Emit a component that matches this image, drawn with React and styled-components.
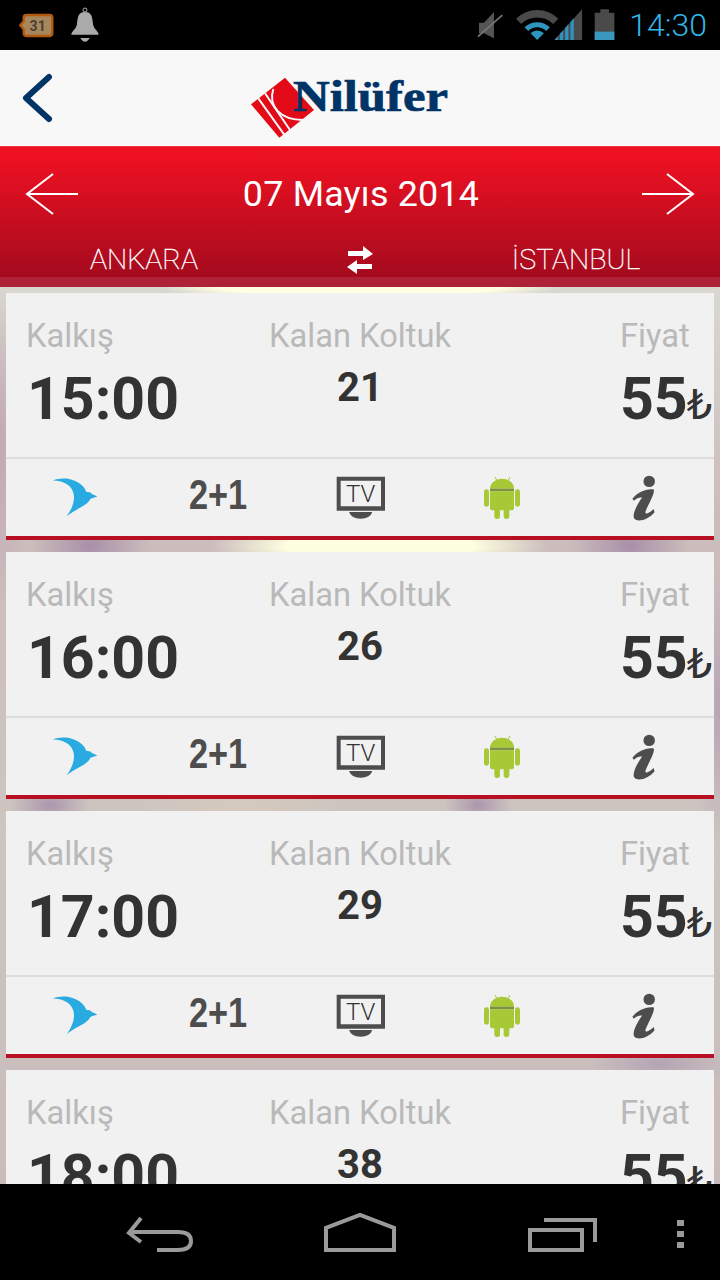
import React from "react";
import styled, { createGlobalStyle } from "styled-components";

const GlobalStyle = createGlobalStyle`
  html, body {
    margin: 0;
    padding: 0;
    background: #000;
  }
`;

const Page = styled.div`
  width: 720px;
  height: 1280px;
  display: flex;
  flex-direction: column;
  overflow: hidden;
  font-family: Roboto, "Liberation Sans", sans-serif;
`;

const StatusBar = styled.div`
  height: 50px;
  flex: none;
  background: #000;
  display: flex;
  align-items: center;
  justify-content: space-between;
  padding: 0 13px 0 17px;
`;

const StatusGroup = styled.div`
  display: flex;
  align-items: center;
  column-gap: 12px;
`;

const Clock = styled.div`
  font-weight: 300;
  font-size: 32px;
  line-height: 54px;
  color: #33b5e5;
`;

const Header = styled.div`
  height: 96px;
  flex: none;
  background: #f8f8f8;
  display: flex;
  align-items: center;
  justify-content: center;
  position: relative;
`;

const BackButton = styled.svg`
  position: absolute;
  left: 22px;
  top: 23px;
`;

const LogoDrawing = styled.svg`
  margin: 20px 20px 0 0;
  overflow: visible;
`;

const DateBand = styled.div`
  height: 141px;
  flex: none;
  box-sizing: border-box;
  border-top: 1px solid #ee3344;
  background: linear-gradient(#ee1122 0%, #ee1122 6%, #a50a1e 93%, #ad2236 93.1%, #ad2236 100%);
  display: flex;
  flex-direction: column;
  color: #fff;
`;

const DateRow = styled.div`
  height: 94px;
  box-sizing: border-box;
  padding: 0 25px;
  display: flex;
  align-items: center;
  justify-content: space-between;
`;

const DateText = styled.div`
  font-size: 35.9px;
  line-height: 40px;
  letter-spacing: 0.2px;
  margin-left: 2px;
`;

const RouteRow = styled.div`
  display: grid;
  grid-template-columns: repeat(3, 216px);
  justify-content: center;
  justify-items: center;
  align-items: center;
  height: 38px;
`;

const City = styled.div`
  font-weight: 100;
  font-size: 28.5px;
  line-height: 36px;
  -webkit-text-stroke: 0.4px #fff;
`;

const List = styled.div`
  flex: 1;
  min-height: 0;
  overflow: hidden;
  box-sizing: border-box;
  padding: 6px 6px 0;
  display: flex;
  flex-direction: column;
  row-gap: 12px;
  background:
    radial-gradient(ellipse 170px 26px at 380px 259px, #feffe0 55%, rgba(254, 255, 224, 0) 100%),
    radial-gradient(ellipse 200px 14px at 360px 0px, #feffe0 70%, rgba(254, 255, 224, 0) 100%),
    radial-gradient(ellipse 60px 40px at 90px 259px, #a890a8 0%, rgba(168, 144, 168, 0) 100%),
    radial-gradient(ellipse 60px 40px at 630px 259px, #a890a8 0%, rgba(168, 144, 168, 0) 100%),
    radial-gradient(ellipse 40px 24px at 50px 518px, #ab97ad 0%, rgba(171, 151, 173, 0) 100%),
    radial-gradient(ellipse 34px 24px at 478px 518px, #ab97ad 0%, rgba(171, 151, 173, 0) 100%),
    radial-gradient(ellipse 70px 30px at 660px 777px, #b4a4b4 0%, rgba(180, 164, 180, 0) 100%),
    radial-gradient(ellipse 30px 160px at 0px 160px, #c2a8b4 0%, rgba(194, 168, 180, 0) 100%),
    radial-gradient(ellipse 30px 140px at 720px 420px, #b8a4b4 0%, rgba(184, 164, 180, 0) 100%),
    radial-gradient(ellipse 100px 24px at 240px 518px, #d6cabd 0%, rgba(214, 202, 189, 0) 100%),
    linear-gradient(#d8d8d0 0%, #cbbcbc 25%, #cdc5c0 60%, #c8bcbc 100%);
`;

const Card = styled.div`
  flex: none;
  height: 247px;
  box-sizing: border-box;
  background: #f1f1f1;
  border-bottom: 4px solid #b80f22;
  display: flex;
  flex-direction: column;
`;

const CardTop = styled.div`
  height: 166px;
  flex: none;
  box-sizing: border-box;
  display: grid;
  grid-template-columns: 1fr 1fr 1fr;
  border-bottom: 2px solid #dddddd;
`;

const Column = styled.div`
  padding-top: 25px;
  padding-left: ${(props) => props.$left || 0}px;
  text-align: ${(props) => props.$align || "left"};
`;

const Label = styled.div`
  font-weight: 400;
  font-size: 32.7px;
  line-height: 36px;
  color: #b9b9b9;
`;

const Time = styled.div`
  font-weight: 700;
  font-size: 59px;
  line-height: 70px;
  margin: 10px 0 0 ${(props) => props.$shift || 0}px;
  color: #333333;
`;

const Seats = styled.div`
  font-weight: 700;
  font-size: 40px;
  line-height: 44px;
  margin-top: 12px;
  color: #333333;
`;

const Price = styled(Time)`
  display: flex;
  align-items: baseline;
`;

const Lira = styled.span`
  font-family: "DejaVu Sans", sans-serif;
  font-weight: 400;
  font-size: 40px;
  margin-left: -1px;
`;

const Features = styled.div`
  flex: 1;
  display: grid;
  grid-template-columns: repeat(5, 1fr);
  align-items: center;
  justify-items: center;
`;

const Seating = styled.div`
  font-family: "Liberation Sans", sans-serif;
  font-weight: 700;
  font-size: 39px;
  line-height: 44px;
  color: #4d4d4d;
  transform: translateY(-3px) scale(0.88, 1.1);
`;

const NavBar = styled.div`
  height: 96px;
  flex: none;
  background: #000;
`;

const NavDrawing = styled.svg`
  display: block;
`;

const trips = [
  { time: "15:00", seats: 21 },
  { time: "16:00", seats: 26 },
  { time: "17:00", seats: 29 },
  { time: "18:00", seats: 38 },
];

function NotificationIcons() {
  return (
    <svg width="85" height="40" viewBox="50 15 255 120">
      <path
        d="M78 45 H148 Q156 45 156 53 V100 Q156 108 148 108 H78 Q70 108 70 100 V88 L60 76 L70 64 V53 Q70 45 78 45 Z"
        fill="#a8875c"
        stroke="#b3590f"
        strokeWidth="7"
      />
      <text x="112" y="93" textAnchor="middle" fontFamily="Roboto" fontWeight="700" fontSize="42" fill="#4a4038">
        31
      </text>
      <circle cx="254" cy="30" r="6" fill="none" stroke="#aaa" strokeWidth="3" />
      <path d="M254 36 C232 36 232 55 230 72 C228 88 214 92 213 104 H295 C294 92 280 88 278 72 C276 55 276 36 254 36 Z" fill="#aaa" />
      <path d="M240 114 H268 Q262 125 254 125 Q246 125 240 114 Z" fill="#aaa" />
    </svg>
  );
}

function SystemIcons() {
  return (
    <svg width="143" height="50" viewBox="40 0 430 150">
      <path d="M55 68 H70 L100 36 V115 L70 100 H55 Z" fill="#555" />
      <path d="M52 110 L125 45" stroke="#777" strokeWidth="5" />
      <path d="M166.4 56.4 A90 90 0 0 1 293.6 56.4 L278 72 A68 68 0 0 0 182 72 Z" fill="#4a4a4a" />
      <path d="M192 82 A54 54 0 0 1 268 82 L257 93 A38 38 0 0 0 203 93 Z" fill="#2f95c0" />
      <path d="M230 120 L210 100 A28 28 0 0 1 250 100 Z" fill="#2f95c0" />
      <path d="M282 120 L365 28 V120 Z" fill="#4a4a4a" />
      <path d="M282 120 L292 109 V120 Z M298 102 L308 91 V120 H298 Z M314 84 L324 73 V120 H314 Z M330 66 L340 55 V120 H330 Z" fill="#2f95c0" />
      <path d="M420 28 H446 V38 H462 V120 H403 V38 H420 Z" fill="#4a4a4a" />
      <rect x="403" y="95" width="59" height="25" fill="#3a97bf" />
    </svg>
  );
}

function Logo() {
  return (
    <LogoDrawing width="200" height="64" viewBox="0 0 200 64">
      <path d="M35 1.7 L1 28.3 L29.3 61.7 L64 34 Z" fill="#e30b17" />
      <path d="M8.3 22.3 L35 59.7 M15 17.3 L40 54" stroke="#f8f8f8" strokeWidth="2" />
      <path d="M23.3 13 C18 30 30 44 53.3 44 L64 43" fill="none" stroke="#f8f8f8" strokeWidth="2" />
      <text
        x="43"
        y="34.5"
        textLength="155"
        lengthAdjust="spacingAndGlyphs"
        fontFamily="Liberation Serif"
        fontWeight="700"
        fontSize="44"
        fill="#003366"
        stroke="#003366"
        strokeWidth="0.7"
      >
        Nilüfer
      </text>
    </LogoDrawing>
  );
}

function Arrow({ flip }) {
  return (
    <svg width="54" height="42" viewBox="0 0 54 42">
      <path
        d={flip ? "M1 21 H52 M26 1 L52 21 L26 41" : "M53 21 H2 M28 1 L2 21 L28 41"}
        fill="none"
        stroke="#fff"
        strokeWidth="2"
      />
    </svg>
  );
}

function SwapIcon() {
  return (
    <svg width="28" height="28" viewBox="0 0 28 28">
      <path d="M2 5 H17 V0 L27 8 L17 14 V10 H2 Z" fill="#fff" />
      <path d="M26 18 H11 V14 L1 21 L11 28 V23 H26 Z" fill="#fff" />
    </svg>
  );
}

function BirdIcon() {
  return (
    <svg width="50" height="41" viewBox="60 40 145 120" style={{ marginRight: 3 }}>
      <path
        d="M68 50 C95 40 135 42 160 72 L166 84 Q178 82 182 90 L198 97 L178 104 C168 125 140 130 108 155 C130 125 142 85 110 62 C98 54 85 50 68 50 Z"
        fill="#29abe2"
      />
    </svg>
  );
}

function TvIcon() {
  return (
    <svg width="50" height="44" viewBox="48 36 150 132" style={{ marginLeft: 2 }}>
      <path d="M50 38 H195 V140 H50 Z M62 50 V127 H183 V50 Z" fill="#4d4d4d" fillRule="evenodd" />
      <text x="122" y="115" textAnchor="middle" fontFamily="Roboto" fontWeight="300" fontSize="72" fill="#333">
        TV
      </text>
      <path d="M87 144 H157 Q150 164 122 164 Q94 164 87 144 Z" fill="#4d4d4d" />
    </svg>
  );
}

function AndroidIcon() {
  return (
    <svg width="38" height="44" viewBox="490 32 112 132">
      <path d="M525 35 L532 48 M570 35 L563 48" stroke="#a4c639" strokeWidth="3" />
      <path d="M510 70 C510 50 530 40 546 40 C562 40 582 50 582 70 Z" fill="#a6c935" />
      <rect x="510" y="70" width="72" height="8" fill="#7e9142" />
      <path d="M510 78 H582 V128 Q582 135 574 135 H518 Q510 135 510 128 Z" fill="#a6c935" />
      <rect x="492" y="72" width="15" height="52" rx="7" fill="#a6c935" />
      <rect x="585" y="72" width="15" height="52" rx="7" fill="#a6c935" />
      <rect x="523" y="130" width="17" height="31" rx="8" fill="#a6c935" />
      <rect x="551" y="130" width="17" height="31" rx="8" fill="#a6c935" />
    </svg>
  );
}

function InfoIcon() {
  return (
    <svg width="27" height="47" viewBox="930 30 80 140">
      <circle cx="987" cy="52" r="17" fill="#4d4d4d" />
      <path
        d="M937 104 C950 86 978 72 1001 76 C1003 92 985 118 976 142 C974 152 986 148 1000 134 L1003 144 C985 166 952 176 942 162 C936 150 950 122 966 100 C955 99 946 105 941 110 Z"
        fill="#4d4d4d"
      />
    </svg>
  );
}

function NavIcons() {
  return (
    <NavDrawing width="720" height="96" viewBox="0 1184 720 96">
      <g fill="none" stroke="#9a9a9a" strokeWidth="4">
        <path d="M141 1218 L129 1233 L141 1242 M130 1232 H178 Q191 1232 191 1241 Q191 1250 178 1250 H157" />
        <path d="M326 1250 V1228 L360 1215 L394 1228 V1250 Z" />
        <path d="M530 1230 H582 V1250 H530 Z" />
        <path d="M544 1220 H595 V1242" />
      </g>
      <g fill="#9a9a9a">
        <rect x="677" y="1220" width="7" height="6" />
        <rect x="677" y="1231" width="7" height="6" />
        <rect x="677" y="1242" width="7" height="6" />
      </g>
    </NavDrawing>
  );
}

export default function App() {
  return (
    <Page>
      <GlobalStyle />
      <StatusBar>
        <NotificationIcons />
        <StatusGroup>
          <SystemIcons />
          <Clock>14:30</Clock>
        </StatusGroup>
      </StatusBar>
      <Header>
        <BackButton width="32" height="50" viewBox="0 0 32 50">
          <path d="M27 4 L4 25 L27 46" fill="none" stroke="#003366" strokeWidth="6" strokeLinecap="round" strokeLinejoin="round" />
        </BackButton>
        <Logo />
      </Header>
      <DateBand>
        <DateRow>
          <Arrow />
          <DateText>07 Mayıs 2014</DateText>
          <Arrow flip />
        </DateRow>
        <RouteRow>
          <City>ANKARA</City>
          <SwapIcon />
          <City>İSTANBUL</City>
        </RouteRow>
      </DateBand>
      <List>
        {trips.map((trip) => (
          <Card key={trip.time}>
            <CardTop>
              <Column $left={20}>
                <Label>Kalkış</Label>
                <Time $shift={1}>{trip.time}</Time>
              </Column>
              <Column $align="center">
                <Label>Kalan Koltuk</Label>
                <Seats>{trip.seats}</Seats>
              </Column>
              <Column $left={142}>
                <Label>Fiyat</Label>
                <Price>
                  55<Lira>₺</Lira>
                </Price>
              </Column>
            </CardTop>
            <Features>
              <BirdIcon />
              <Seating>2+1</Seating>
              <TvIcon />
              <AndroidIcon />
              <InfoIcon />
            </Features>
          </Card>
        ))}
      </List>
      <NavBar>
        <NavIcons />
      </NavBar>
    </Page>
  );
}
